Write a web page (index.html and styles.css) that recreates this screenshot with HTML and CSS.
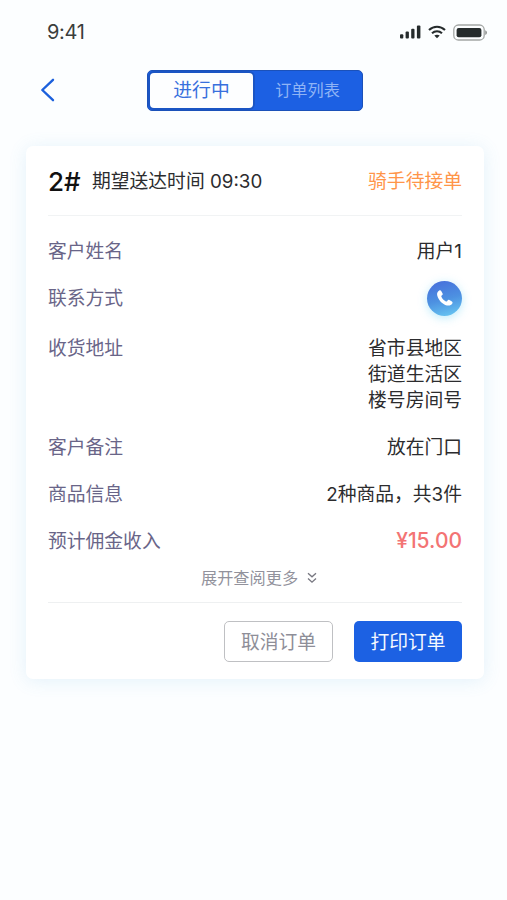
FILE: index.html
```html
<!DOCTYPE html>
<html lang="zh-CN">
<head>
<meta charset="utf-8">
<meta name="viewport" content="width=device-width, initial-scale=1">
<title>订单</title>
<link rel="stylesheet" href="styles.css">
</head>
<body>
<header class="status">
  <span class="clock">9:41</span>
  <div class="indicators">
    <svg width="21" height="14" viewBox="0 0 21 14" fill="#252b2c"><rect x="0" y="9.2" width="3.3" height="4.2" rx="1"/><rect x="5.6" y="6.6" width="3.3" height="6.8" rx="1"/><rect x="11.2" y="3.8" width="3.3" height="9.6" rx="1"/><rect x="16.9" y="0.4" width="3.5" height="13" rx="1"/></svg>
    <svg width="18" height="14" viewBox="0 0 18 14" fill="none" stroke="#252b2c" stroke-width="2.1"><path d="M1 5.1C5.6.7 12.4.7 17 5.1M4 8.3c2.9-2.7 7.1-2.7 10 0"/><path d="M9 13.2 6.3 10.6c1.5-1.3 3.9-1.3 5.4 0z" fill="#252b2c" stroke="none"/></svg>
    <svg width="34" height="17" viewBox="0 0 34 17"><rect x=".8" y="1" width="30.4" height="15" rx="4.6" fill="none" stroke="#a3a6a5" stroke-width="1.3"/><rect x="3.6" y="4" width="24.8" height="9.2" rx="2" fill="#252b2c"/><path d="M32.2 6.2c2.4.8 2.4 4 0 4.8z" fill="#949796"/></svg>
  </div>
</header>

<nav class="nav">
  <button class="back" aria-label="返回"><svg width="16" height="24" viewBox="0 0 16 24" fill="none" stroke="#1c60dc" stroke-width="2.4" stroke-linecap="round" stroke-linejoin="round"><path d="M13 1.8 2.3 12 13 22.2"/></svg></button>
  <div class="tabs">
    <button class="tab active">进行中</button>
    <button class="tab">订单列表</button>
  </div>
</nav>

<main class="card">
  <div class="card-head">
    <span class="number">2#</span>
    <span class="time">期望送达时间 09:30</span>
    <span class="state">骑手待接单</span>
  </div>
  <dl class="details">
    <div class="row"><dt>客户姓名</dt><dd>用户1</dd></div>
    <div class="row contact"><dt>联系方式</dt><dd><button class="phone" aria-label="拨打电话"><svg width="18" height="18" viewBox="0 0 18 18" fill="#fff"><path d="M3.2 1.5C1.4 2.5.6 4.5 1.3 6.7c1.4 4.7 5 8.5 9.6 9.7 2.2.6 4.3-.1 5.4-1.9.5-.8.3-1.5-.4-2l-2.5-1.5c-.7-.4-1.4-.2-1.8.4l-.5.8c-.3.4-.7.5-1.2.2-2.1-1-3.6-2.6-4.5-4.6-.2-.5-.1-.9.3-1.2l.6-.5c.5-.5.6-1.1.3-1.7L5.2 1.9c-.4-.7-1.2-.9-2-.4z"/></svg></button></dd></div>
    <div class="row"><dt>收货地址</dt><dd>省市县地区<br>街道生活区<br>楼号房间号</dd></div>
    <div class="row"><dt>客户备注</dt><dd>放在门口</dd></div>
    <div class="row"><dt>商品信息</dt><dd>2种商品，共3件</dd></div>
    <div class="row"><dt>预计佣金收入</dt><dd class="price">¥15.00</dd></div>
  </dl>
  <button class="more">展开查阅更多<svg width="10" height="12" viewBox="0 0 10 12" fill="none" stroke="#777780" stroke-width="1.3"><path d="m1 1.2 4 3.6 4-3.6M1 6.6l4 3.6 4-3.6"/></svg></button>
  <footer class="actions">
    <button class="btn">取消订单</button>
    <button class="btn primary">打印订单</button>
  </footer>
</main>
</body>
</html>
```
FILE: styles.css
```css
* { box-sizing: border-box; }

body {
  margin: 0;
  min-height: 900px;
  background: #fcfeff;
  color: #2c2c2e;
  font: 18.8px/26px Inter, "Noto Sans CJK SC", sans-serif;
}

button {
  margin: 0;
  padding: 0;
  border: 0;
  background: none;
  font: inherit;
  color: inherit;
}

svg { display: block; }

.status {
  display: flex;
  align-items: center;
  justify-content: space-between;
  height: 64px;
  padding: 0 20px 0 47px;
}

.clock { font-size: 20px; color: #3b3e3d; letter-spacing: -.3px; }

.indicators { display: flex; align-items: center; gap: 7px; }

.nav {
  display: flex;
  align-items: center;
  height: 52px;
  padding-left: 40px;
}

.back { width: 107px; }

.tabs {
  display: flex;
  width: 216px;
  height: 41px;
  padding: 2px;
  border-radius: 5px;
  background: #1c60e3;
  border: 1px solid #1b51b9;
}

.tab {
  flex: 1;
  padding-left: 2px;
  font-size: 16.2px;
  color: #8fb4f5;
}

.tab.active {
  flex: 0 0 103px;
  padding: 2px 0 0;
  border-radius: 4px;
  background: #fdfeff;
  box-shadow: 0 0 0 2px #1b55c4;
  color: #3970dd;
  font-size: 18.8px;
}

.card {
  width: 458px;
  height: 533px;
  margin: 30px 0 0 26px;
  padding: 0 22px;
  border-radius: 7px;
  background: #fff;
  box-shadow: 0 2px 18px rgba(80, 160, 220, .14);
}

.card-head {
  display: flex;
  align-items: center;
  height: 70px;
  padding-top: 2px;
  border-bottom: 1px solid #f1f3f4;
}

.number {
  width: 44px;
  font-size: 26px;
  font-weight: 500;
  color: #111;
}

.time { white-space: nowrap; }
.state { margin-left: auto; color: #ff9549; }

.details {
  display: flex;
  flex-direction: column;
  gap: 21.3px;
  margin: 23px 0 0;
}

.row {
  display: flex;
  justify-content: space-between;
  line-height: 25.7px;
}

.contact { align-items: center; height: 26px; margin-bottom: 3px; }

dt { color: #696588; }
dd { margin: 0; text-align: right; }

.phone {
  display: flex;
  align-items: center;
  justify-content: center;
  width: 35px;
  height: 35px;
  margin-top: -2px;
  border-radius: 50%;
  background: linear-gradient(165deg, #4773dc 10%, #4d91e1 52%, #67c6f2 95%);
  box-shadow: 0 2px 10px rgba(90, 205, 245, .4);
}

.price { font-size: 21px; font-weight: 500; line-height: 23px; color: #f37474; }

.more {
  display: flex;
  align-items: center;
  gap: 9px;
  height: 24px;
  margin: 12px 0 12px 153px;
  font-size: 16.2px;
  color: #92929c;
}

.actions {
  display: flex;
  justify-content: flex-end;
  gap: 21px;
  padding-top: 18px;
  border-top: 1px solid #eef0f1;
}

.btn {
  width: 109px;
  height: 41px;
  padding-top: 3px;
  border: 1.5px solid #bfc0c3;
  border-radius: 5px;
  color: #8e8e98;
}

.btn.primary {
  width: 108px;
  border: 0;
  background: #1c61e3;
  color: #f5f9ff;
}
```
